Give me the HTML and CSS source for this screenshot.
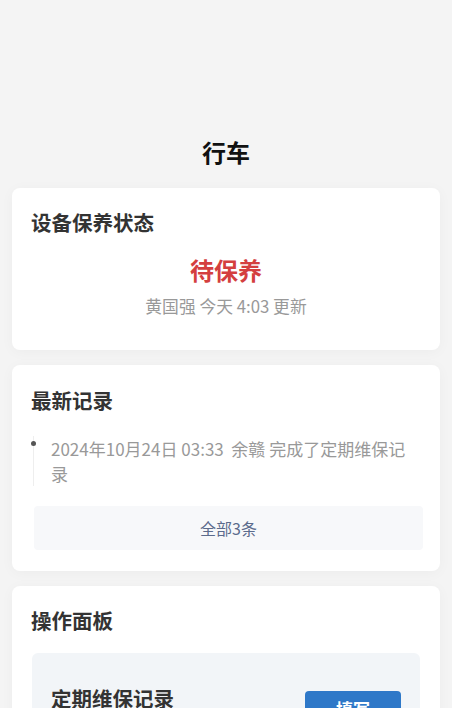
FILE: index.html
```html
<!DOCTYPE html>
<html lang="zh-CN">
<head>
<meta charset="utf-8">
<title>行车</title>
<link rel="stylesheet" href="styles.css">
</head>
<body>
<header class="top">
  <h1 class="page-title">行车</h1>
</header>
<main class="list">
  <section class="card card-status">
    <h2 class="card-title">设备保养状态</h2>
    <div class="status">待保养</div>
    <div class="status-meta">黄国强 今天 4:03 更新</div>
  </section>
  <section class="card card-records">
    <h2 class="card-title">最新记录</h2>
    <ul class="timeline">
      <li class="timeline-item"><span class="dot"></span>2024年10月24日 03:33&nbsp; 余赣 完成了定期维保记录</li>
    </ul>
    <div class="all-btn">全部3条</div>
  </section>
  <section class="card card-panel">
    <h2 class="card-title">操作面板</h2>
    <div class="panel">
      <div class="panel-row">
        <div class="panel-title">定期维保记录</div>
        <div class="fill-btn">填写</div>
      </div>
    </div>
  </section>
</main>
</body>
</html>
```

FILE: styles.css
```css
* { box-sizing: border-box; }
html, body { margin: 0; padding: 0; }
body {
  background: #f4f4f4;
  font-family: "Noto Sans CJK SC", "Noto Sans", sans-serif;
  color: #333;
  width: 452px;
  overflow: hidden;
}
.top {
  padding-top: 137px;
  margin-bottom: 21px;
}
.page-title {
  margin: 0;
  text-align: center;
  font-size: 24px;
  line-height: 30px;
  font-weight: 700;
  color: #111;
}
.list {
  display: flex;
  flex-direction: column;
  gap: 15px;
  padding: 0 12px;
}
.card {
  background: #fff;
  border-radius: 8px;
  box-shadow: 0 2px 14px rgba(0,0,0,0.035);
  padding: 20px 19px 21px 19px;
}
.card-title {
  margin: 0;
  font-size: 20.5px;
  line-height: 28px;
  font-weight: 700;
  color: #333;
}
.card-status { padding-bottom: 32px; }
.status {
  margin-top: 18px;
  text-align: center;
  font-size: 24px;
  line-height: 32px;
  font-weight: 700;
  color: #d43f3f;
}
.status-meta {
  margin-top: 8px;
  text-align: center;
  font-size: 16.8px;
  line-height: 24px;
  color: #999;
}
.card-records { padding-top: 21px; }
.timeline {
  list-style: none;
  margin: 22px 0 0 0;
  padding: 0;
}
.timeline-item {
  position: relative;
  margin-left: 2px;
  padding-left: 17px;
  border-left: 1px solid #eeeeee;
  font-size: 17px;
  line-height: 25px;
  color: #999;
}
.dot {
  position: absolute;
  left: -3px;
  top: 5px;
  width: 5px;
  height: 5px;
  border-radius: 50%;
  background: #555;
}
.all-btn {
  margin: 20px -2px 0 3px;
  height: 44px;
  line-height: 44px;
  text-align: center;
  background: #f7f8fa;
  border-radius: 4px;
  font-size: 16px;
  color: #5b6b8c;
}
.panel {
  margin: 19px 1px 0 1px;
  background: #f2f5f8;
  border-radius: 6px;
  padding: 31px 19px 20px 19px;
}
.panel-row {
  display: flex;
  justify-content: space-between;
  align-items: flex-start;
}
.panel-title {
  font-size: 20.5px;
  line-height: 28px;
  font-weight: 700;
  color: #333;
}
.fill-btn {
  margin-top: 7px;
  width: 96px;
  height: 36px;
  line-height: 36px;
  text-align: center;
  background: #2e78c8;
  color: #fff;
  border-radius: 4px;
  font-size: 17px;
  font-weight: 700;
}
```
